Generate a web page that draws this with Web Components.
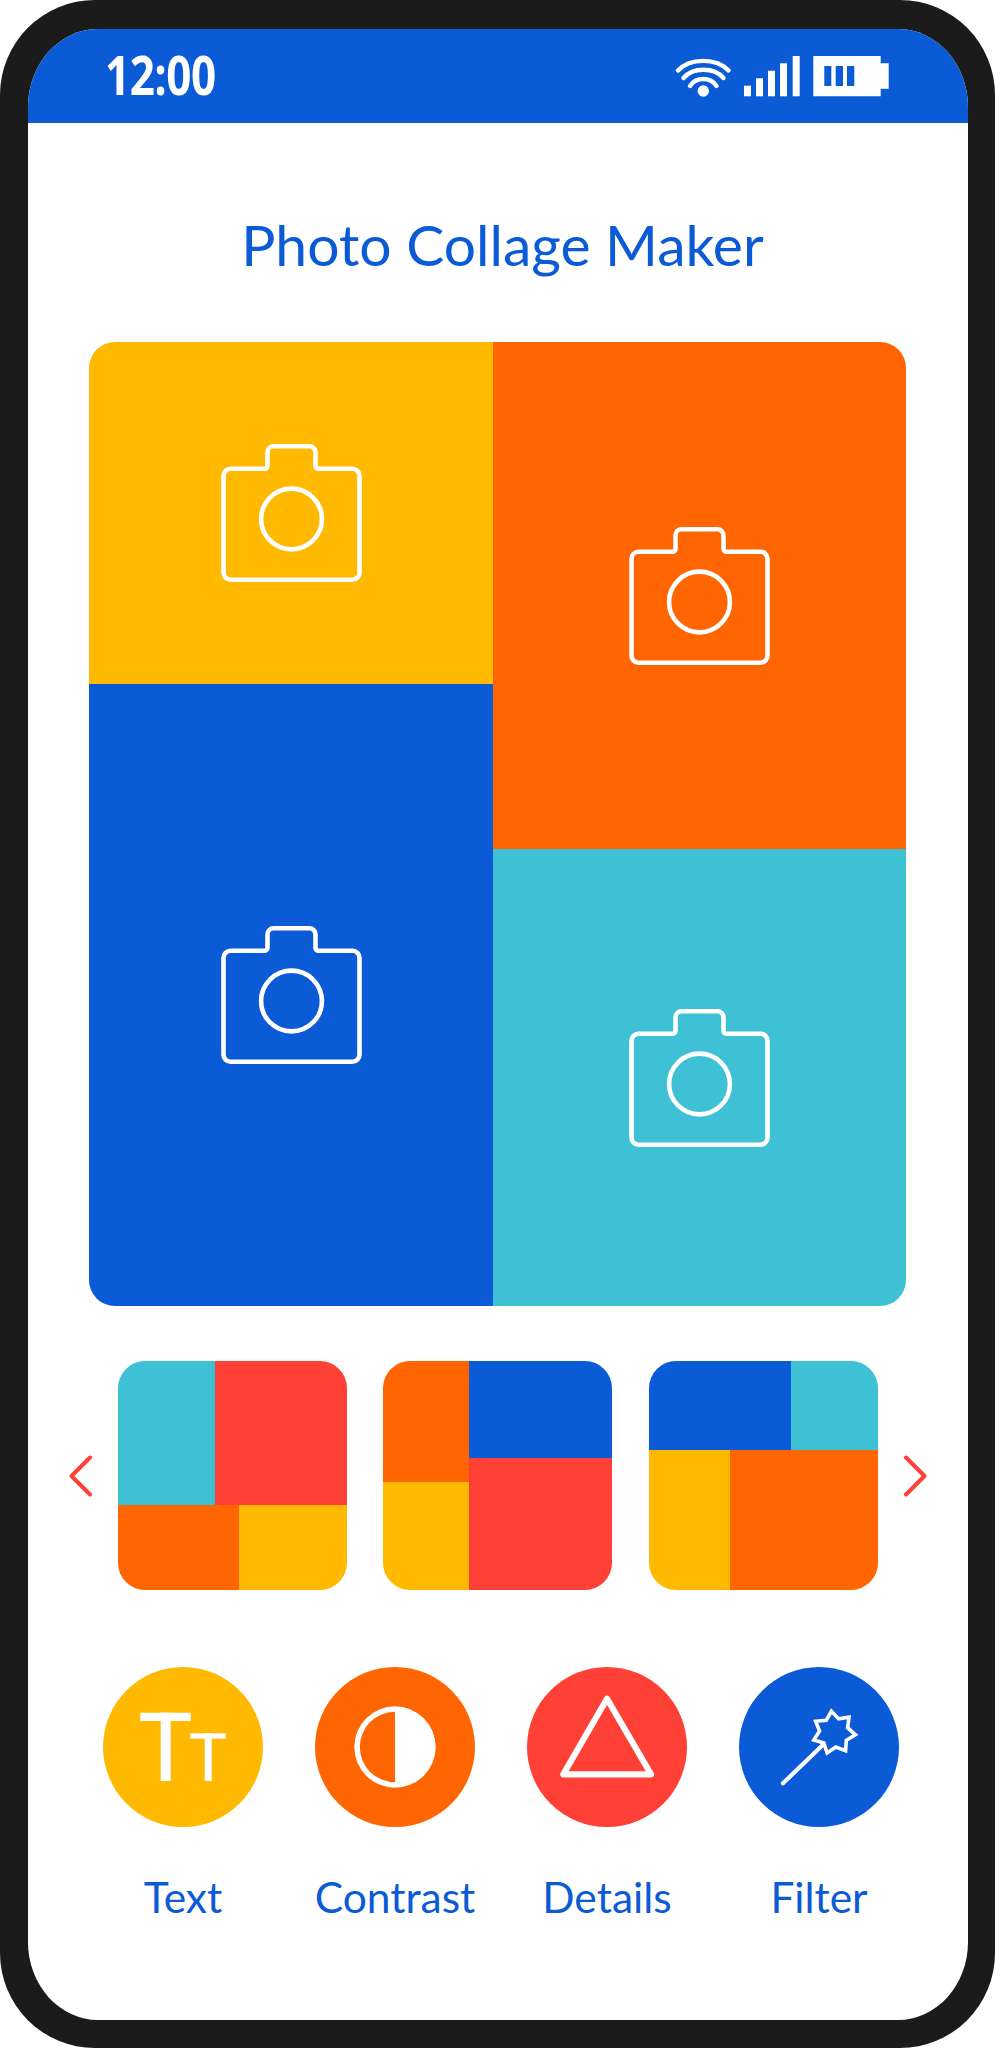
<!DOCTYPE html>
<html lang="en">
<head>
<meta charset="utf-8">
<title>Photo Collage Maker</title>
<style>
  html, body { margin: 0; background: #fff; }
</style>
</head>
<body>
<phone-frame>
  <status-bar time="12:00"></status-bar>
  <app-title>Photo Collage Maker</app-title>
  <collage-panel></collage-panel>
  <layout-picker>
    <layout-thumb>
      <color-split size="144" first="97" a="#3ec0d5" b="#ff4036"></color-split>
      <color-split grow first="121" a="#ff6500" b="#ffb900"></color-split>
    </layout-thumb>
    <layout-thumb columns>
      <color-split columns size="86" first="121" a="#ff6500" b="#ffb900"></color-split>
      <color-split columns grow first="97" a="#0b5ad6" b="#ff4036"></color-split>
    </layout-thumb>
    <layout-thumb>
      <color-split size="89" first="142" a="#0b5ad6" b="#3ec0d5"></color-split>
      <color-split grow first="81" a="#ffb900" b="#ff6500"></color-split>
    </layout-thumb>
  </layout-picker>
  <tool-bar>
    <tool-button label="Text" color="#ffb900">
      <svg viewBox="0 0 160 160">
        <g fill="#fff">
          <rect x="37.3" y="45.7" width="50.4" height="8.3"/>
          <rect x="57.7" y="45.7" width="10" height="68.3"/>
          <rect x="87.3" y="66.3" width="35.4" height="5.4"/>
          <rect x="101.7" y="66.3" width="7" height="47.7"/>
        </g>
      </svg>
    </tool-button>
    <tool-button label="Contrast" color="#ff6500">
      <svg viewBox="0 0 160 160">
        <circle cx="80" cy="80" r="40.7" fill="#fff"/>
        <path d="M80 44.8a35.2 35.2 0 0 0 0 70.4z" fill="#ff6500"/>
      </svg>
    </tool-button>
    <tool-button label="Details" color="#ff4036">
      <svg viewBox="0 0 160 160">
        <path d="M80 31.7L124 107.3H36.3z" fill="none" stroke="#fff" stroke-width="6.2" stroke-linejoin="round"/>
      </svg>
    </tool-button>
    <tool-button label="Filter" color="#0b5ad6">
      <svg viewBox="0 0 160 160">
        <path d="M82.7 79L44 116.3" fill="none" stroke="#fff" stroke-width="4.2" stroke-linecap="round"/>
        <polygon points="92.4,44.3 99.65,51.9 110.05,50.2 108.6,60.7 116.4,67.8 107.35,73.2 106.6,83.7 96.8,80 88.1,86 84.85,75.95 74.8,72.9 80.6,64.1 76.7,54.3 87.2,53.4" fill="none" stroke="#fff" stroke-width="3.6"/>
      </svg>
    </tool-button>
  </tool-bar>
</phone-frame>

<script>
const BLUE = "#0b5ad6";

class PhoneFrame extends HTMLElement {
  constructor() {
    super();
    this.attachShadow({ mode: "open" });
    this.shadowRoot.innerHTML = `
      <style>
        :host {
          display: block;
          width: 995px;
          height: 2048px;
          box-sizing: border-box;
          padding: 29px 27px 28px 28px;
          background: #1b1b1b;
          border-radius: 95px;
        }
        .screen {
          height: 100%;
          background: #fff;
          border-radius: 70px / 78px;
          overflow: hidden;
        }
      </style>
      <div class="screen"><slot></slot></div>
    `;
  }
}

class StatusBar extends HTMLElement {
  constructor() {
    super();
    this.attachShadow({ mode: "open" });
    this.shadowRoot.innerHTML = `
      <style>
        :host {
          display: flex;
          align-items: flex-start;
          justify-content: space-between;
          height: 94px;
          box-sizing: border-box;
          padding: 17px 79px 0 77px;
          background: ${BLUE};
        }
        .time {
          font: 700 53px/58px "Open Sans", sans-serif;
          letter-spacing: -0.6px;
          color: #fff;
          transform: scaleX(0.83);
          transform-origin: left center;
        }
        svg { display: block; margin-top: 10px; }
      </style>
      <span class="time"></span>
      <svg width="214" height="41" viewBox="0 0 214 41">
        <g fill="none" stroke="#fff" stroke-width="4.4" stroke-linecap="round">
          <path d="M3 14.5C15 1.6 41.5 1.6 53.5 14.5"/>
          <path d="M8.5 22C18 11 39 11 48.5 22"/>
          <path d="M15 30C21 20.7 35.5 20.7 41.5 30"/>
        </g>
        <circle cx="28.3" cy="35" r="5.7" fill="#fff"/>
        <g fill="#fff">
          <rect x="69" y="29.7" width="7" height="10.6"/>
          <rect x="81" y="22.3" width="7" height="18"/>
          <rect x="93" y="14.7" width="7" height="25.6"/>
          <rect x="105" y="7.3" width="7" height="33"/>
          <rect x="117.7" y="0" width="7" height="40.3"/>
        </g>
        <path fill-rule="evenodd" fill="#fff" d="M138.3 0H205.7V7.3H213.7V32.7H205.7V40.3H138.3zM149.3 10V30H156.3V10zM160.7 10V30H168V10zM172 10V30H179.3V10z"/>
      </svg>
    `;
    this.shadowRoot.querySelector(".time").textContent = this.getAttribute("time");
  }
}

class AppTitle extends HTMLElement {
  constructor() {
    super();
    this.attachShadow({ mode: "open" });
    this.shadowRoot.innerHTML = `
      <style>
        :host {
          display: block;
          height: 219px;
          box-sizing: border-box;
          padding: 86px 0 0 9px;
          text-align: center;
          font: 400 57px/70px Lato, sans-serif;
          color: ${BLUE};
        }
      </style>
      <slot></slot>
    `;
  }
}

class CameraIcon extends HTMLElement {
  constructor() {
    super();
    this.attachShadow({ mode: "open" });
    this.shadowRoot.innerHTML = `
      <style>
        :host { display: block; width: 141px; height: 138px; }
        svg { display: block; }
      </style>
      <svg width="141" height="138" viewBox="0 0 141 138" fill="none" stroke="#fff" stroke-width="4.6" stroke-linejoin="round">
        <path d="M9.5 24.8H43.5A3 3 0 0 0 46.5 21.8V8.3A6 6 0 0 1 52.5 2.3H88.5A6 6 0 0 1 94.5 8.3V21.8A3 3 0 0 0 97.5 24.8H131.5A7 7 0 0 1 138.5 31.8V128.7A7 7 0 0 1 131.5 135.7H9.5A7 7 0 0 1 2.5 128.7V31.8A7 7 0 0 1 9.5 24.8Z"/>
        <circle cx="70.5" cy="75" r="30.4"/>
      </svg>
    `;
  }
}

class CollagePanel extends HTMLElement {
  constructor() {
    super();
    this.attachShadow({ mode: "open" });
    this.shadowRoot.innerHTML = `
      <style>
        :host {
          display: flex;
          width: 817px;
          height: 964px;
          margin-left: 61px;
          border-radius: 26px;
          overflow: hidden;
        }
        .col { display: flex; flex-direction: column; }
        .left { width: 404px; }
        .right { flex: 1; }
        .cell {
          display: flex;
          align-items: center;
          justify-content: center;
        }
        .grow { flex: 1; }
      </style>
      <div class="col left">
        <div class="cell" style="height:342px;background:#ffb900"><camera-icon></camera-icon></div>
        <div class="cell grow" style="background:${BLUE}"><camera-icon></camera-icon></div>
      </div>
      <div class="col right">
        <div class="cell" style="height:507px;background:#ff6500"><camera-icon></camera-icon></div>
        <div class="cell grow" style="background:#3ec0d5"><camera-icon></camera-icon></div>
      </div>
    `;
  }
}

class LayoutPicker extends HTMLElement {
  constructor() {
    super();
    this.attachShadow({ mode: "open" });
    this.shadowRoot.innerHTML = `
      <style>
        :host {
          display: flex;
          align-items: center;
          gap: 25px;
          height: 229px;
          margin-top: 55px;
          padding-left: 41px;
        }
        .thumbs { display: flex; gap: 36.35px; }
        svg { display: block; flex: none; }
      </style>
      <svg width="24" height="42" viewBox="0 0 24 42" fill="none" stroke="#ff4036" stroke-width="4" stroke-linecap="round" stroke-linejoin="round"><path d="M21 2.5L2.5 21L21 39.5"/></svg>
      <div class="thumbs"><slot></slot></div>
      <svg width="24" height="42" viewBox="0 0 24 42" fill="none" stroke="#ff4036" stroke-width="4" stroke-linecap="round" stroke-linejoin="round"><path d="M3 2.5L21.5 21L3 39.5"/></svg>
    `;
  }
}

class LayoutThumb extends HTMLElement {
  constructor() {
    super();
    this.attachShadow({ mode: "open" });
    this.shadowRoot.innerHTML = `
      <style>
        :host {
          display: flex;
          flex-direction: column;
          width: 229px;
          height: 229px;
          border-radius: 27px;
          overflow: hidden;
        }
        :host([columns]) { flex-direction: row; }
      </style>
      <slot></slot>
    `;
  }
}

// one band of a thumb, cut in two colours
class ColorSplit extends HTMLElement {
  constructor() {
    super();
    this.attachShadow({ mode: "open" });
    this.shadowRoot.innerHTML = `
      <style>
        :host { display: flex; }
        :host([columns]) { flex-direction: column; }
        :host([grow]) { flex: 1; }
        .b { flex: 1; }
      </style>
      <div class="a"></div>
      <div class="b"></div>
    `;
    const columns = this.hasAttribute("columns");
    const size = this.getAttribute("size");
    if (size) this.style[columns ? "width" : "height"] = size + "px";
    const a = this.shadowRoot.querySelector(".a");
    a.style.background = this.getAttribute("a");
    a.style[columns ? "height" : "width"] = this.getAttribute("first") + "px";
    this.shadowRoot.querySelector(".b").style.background = this.getAttribute("b");
  }
}

class ToolBar extends HTMLElement {
  constructor() {
    super();
    this.attachShadow({ mode: "open" });
    this.shadowRoot.innerHTML = `
      <style>
        :host {
          display: flex;
          gap: 52px;
          margin-top: 77px;
          padding-left: 75px;
        }
      </style>
      <slot></slot>
    `;
  }
}

class ToolButton extends HTMLElement {
  constructor() {
    super();
    this.attachShadow({ mode: "open" });
    this.shadowRoot.innerHTML = `
      <style>
        :host {
          display: flex;
          flex-direction: column;
          align-items: center;
          width: 160px;
        }
        .circle {
          width: 160px;
          height: 160px;
          border-radius: 50%;
        }
        ::slotted(svg) { display: block; width: 160px; height: 160px; }
        .label {
          margin-top: 45px;
          font: 400 42.5px/50px Lato, sans-serif;
          color: ${BLUE};
          white-space: nowrap;
        }
      </style>
      <div class="circle"><slot></slot></div>
      <div class="label"></div>
    `;
    this.shadowRoot.querySelector(".circle").style.background = this.getAttribute("color");
    this.shadowRoot.querySelector(".label").textContent = this.getAttribute("label");
  }
}

customElements.define("phone-frame", PhoneFrame);
customElements.define("status-bar", StatusBar);
customElements.define("app-title", AppTitle);
customElements.define("camera-icon", CameraIcon);
customElements.define("collage-panel", CollagePanel);
customElements.define("layout-picker", LayoutPicker);
customElements.define("layout-thumb", LayoutThumb);
customElements.define("color-split", ColorSplit);
customElements.define("tool-bar", ToolBar);
customElements.define("tool-button", ToolButton);
</script>
</body>
</html>
